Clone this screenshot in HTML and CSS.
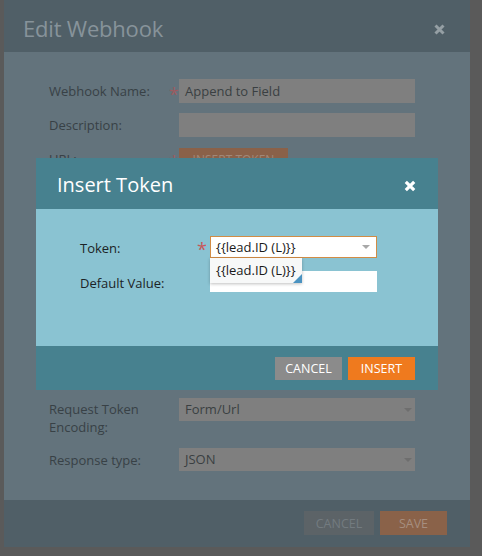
FILE: index.html
```html
<!DOCTYPE html>
<html>
<head>
<meta charset="utf-8">
<link rel="stylesheet" href="styles.css">
</head>
<body>
<div class="page">
  <div class="dialog">
    <div class="dialog-header">
      <span class="dialog-title">Edit Webhook</span>
      <svg class="close dim-close" width="11" height="11" viewBox="0 0 11 11"><path d="M1.5 1.5 L9.5 9.5 M9.5 1.5 L1.5 9.5" stroke="currentColor" stroke-width="3" fill="none"/></svg>
    </div>
    <div class="dialog-body">
      <div class="row">
        <label class="lbl">Webhook Name:</label>
        <span class="req">*</span>
        <div class="field">Append to Field</div>
      </div>
      <div class="row">
        <label class="lbl">Description:</label>
        <span class="req"></span>
        <div class="field"></div>
      </div>
      <div class="row">
        <label class="lbl lbl-url">URL:</label>
        <span class="req">*</span>
        <div><button class="btn-token">INSERT TOKEN</button></div>
      </div>
      <div class="row">
        <span></span><span></span>
        <div class="field textarea"></div>
      </div>
      <div class="row row-enc">
        <label class="lbl lbl-two">Request Token<br>Encoding:</label>
        <span class="req"></span>
        <div class="field select">Form/Url<i class="caret dim-caret"></i></div>
      </div>
      <div class="row">
        <label class="lbl">Response type:</label>
        <span class="req"></span>
        <div class="field select">JSON<i class="caret dim-caret"></i></div>
      </div>
    </div>
    <div class="dialog-footer">
      <button class="btn btn-cancel-dim">CANCEL</button>
      <button class="btn btn-save-dim">SAVE</button>
    </div>
  </div>

  <div class="modal">
    <div class="modal-header">
      <span class="modal-title">Insert Token</span>
      <svg class="close" width="12" height="12" viewBox="0 0 12 12"><path d="M1.8 1.8 L10.2 10.2 M10.2 1.8 L1.8 10.2" stroke="#ffffff" stroke-width="3.2" fill="none"/></svg>
    </div>
    <div class="modal-body">
      <div class="mrow">
        <label class="mlbl">Token:</label>
        <span class="mreq">*</span>
        <div class="mselect">{{lead.ID (L)}}<i class="caret"></i>
          <div class="menu">{{lead.ID (L)}}<span class="grip"></span></div>
        </div>
      </div>
      <div class="mrow">
        <label class="mlbl">Default Value:</label>
        <span class="mreq"></span>
        <div class="minput"></div>
      </div>
    </div>
    <div class="modal-footer">
      <button class="btn btn-cancel">CANCEL</button>
      <button class="btn btn-insert">INSERT</button>
    </div>
  </div>
</div>
</body>
</html>
```
FILE: styles.css
```css
* { box-sizing: border-box; }
html, body { margin: 0; padding: 0; }
body {
  background: #5a5a5a;
  font-family: "Open Sans", "Noto Sans", sans-serif;
  width: 482px;
  height: 556px;
  overflow: hidden;
}
.page { position: relative; width: 482px; height: 556px; }

.dialog {
  margin-left: 4px;
  width: 466px;
  height: 547px;
  display: flex;
  flex-direction: column;
  background: #63737c;
}
.dialog-header {
  height: 52px;
  background: #505f67;
  display: flex;
  align-items: center;
  justify-content: space-between;
  padding: 0 24px 0 19px;
}
.dialog-title {
  font-size: 22px;
  color: #87939a;
  letter-spacing: -0.2px;
  line-height: 1;
  margin-top: 4px;
}
.dim-close { color: #959fa4; margin-top: 6px; margin-right: 1px; }

.dialog-body {
  flex: 1;
  padding: 27px 0 0 45px;
}
.row {
  display: grid;
  grid-template-columns: 114px 16px 236px;
  margin-bottom: 10px;
  align-items: start;
}
.lbl {
  font-size: 13px;
  color: #384146;
  line-height: 24px;
}
.lbl-two { line-height: 18px; padding-top: 2px; }
.row-enc { margin-bottom: 12px; }
.req {
  color: #9c5c60;
  font-size: 18px;
  line-height: 30px;
  height: 24px;
  padding-left: 6px;
}
.field {
  height: 24px;
  background: #7f7f7f;
  font-size: 13px;
  color: #3a3f42;
  line-height: 24px;
  padding-left: 6px;
  position: relative;
}
.textarea { height: 206px; }
.select { height: 23px; line-height: 23px; }
.btn-token {
  height: 24px;
  width: 109px;
  border: 0;
  background: #8a6149;
  color: #a08878;
  font-family: inherit;
  font-size: 12px;
  padding: 0;
}
.caret {
  position: absolute;
  right: 4px;
  top: 10px;
  width: 0;
  height: 0;
  border-left: 4px solid transparent;
  border-right: 4px solid transparent;
  border-top: 4px solid #ababab;
}
.dim-caret { border-top-color: #6e6e6e; right: 3px; }

.dialog-footer {
  height: 47px;
  background: #505f67;
  display: flex;
  justify-content: flex-end;
  align-items: flex-start;
  padding: 11px 23px 0 0;
  gap: 6px;
}
.btn {
  border: 0;
  font-family: inherit;
  font-size: 12.5px;
  padding: 0;
  height: 24px;
  width: 67px;
}
.btn-cancel-dim { background: #5c6367; color: #737b80; width: 70px; }
.btn-save-dim { background: #8a6249; color: #a68e7f; }

/* Insert Token modal (overlay) */
.modal {
  position: absolute;
  left: 36px;
  top: 158px;
  width: 402px;
  height: 232px;
  display: flex;
  flex-direction: column;
  background: #8ac3d2;
}
.modal-header {
  height: 51px;
  background: #47818f;
  display: flex;
  align-items: center;
  justify-content: space-between;
  padding: 0 22px 0 21px;
}
.modal-title {
  font-size: 20px;
  color: #ffffff;
  line-height: 1;
  margin-top: 2px;
}
.modal-header .close { margin-top: 4px; }
.modal-body {
  flex: 1;
  padding: 27px 0 0 44px;
}
.mrow {
  display: grid;
  grid-template-columns: 117px 13px 167px;
  margin-bottom: 12px;
  align-items: start;
}
.mlbl {
  font-size: 13px;
  color: #1c2326;
  line-height: 22px;
  padding-top: 1px;
}
.mreq {
  color: #c8585a;
  font-size: 18px;
  line-height: 26px;
  height: 22px;
}
.mselect {
  position: relative;
  height: 22px;
  background: #ffffff;
  border: 1px solid #d28c45;
  font-size: 13px;
  color: #1a1a1a;
  line-height: 20px;
  padding-left: 5px;
}
.mselect .caret { right: 6px; top: 8px; border-top-color: #a8a8a8; }
.minput {
  height: 21px;
  background: #ffffff;
}
.menu {
  position: absolute;
  left: -1px;
  top: 21px;
  width: 92px;
  height: 25px;
  background: #f7f8f8;
  box-shadow: 0 1px 3px rgba(0,0,0,0.25);
  font-size: 13px;
  line-height: 25px;
  padding-left: 6px;
  color: #1a1a1a;
  z-index: 2;
}
.grip {
  position: absolute;
  right: 0;
  bottom: 0;
  width: 0;
  height: 0;
  border-left: 9px solid transparent;
  border-bottom: 9px solid #4b93c1;
}
.modal-footer {
  height: 44px;
  background: #47818f;
  display: flex;
  justify-content: flex-end;
  align-items: flex-start;
  padding: 11px 23px 0 0;
  gap: 6px;
}
.btn-cancel { background: #8b8b8b; color: #ffffff; height: 23px; }
.btn-insert { background: #ef7a1e; color: #ffffff; height: 23px; }
```
